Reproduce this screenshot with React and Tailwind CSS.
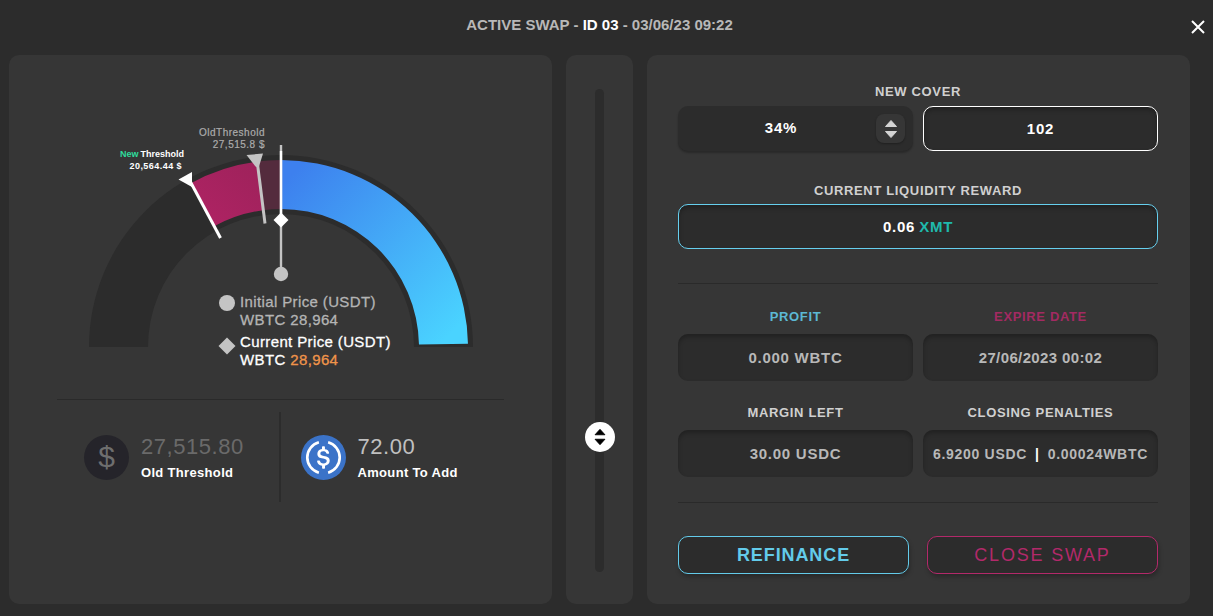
import { useState } from "react";

const CX = 281;
const CY = 347;

// Angles are measured in degrees clockwise from the top of the dial.
function point(radius, angle) {
  const a = (angle * Math.PI) / 180;
  return `${(CX + radius * Math.sin(a)).toFixed(2)} ${(CY - radius * Math.cos(a)).toFixed(2)}`;
}

function ring(outer, inner, from, to) {
  return `M${point(outer, from)} A${outer} ${outer} 0 0 1 ${point(outer, to)} L${point(inner, to)} A${inner} ${inner} 0 0 0 ${point(inner, from)} Z`;
}

function Gauge() {
  return (
    <svg
      viewBox="81 125 400 250"
      className="mx-auto block w-[400px] max-w-full"
      role="img"
      aria-label="Swap price gauge"
    >
      <defs>
        <linearGradient id="gain" gradientUnits="userSpaceOnUse" x1="281" y1="185" x2="440" y2="345">
          <stop offset="0" stopColor="#3d80ee" />
          <stop offset="1" stopColor="#4ad3ff" />
        </linearGradient>
        <linearGradient id="loss" gradientUnits="userSpaceOnUse" x1="200" y1="230" x2="260" y2="165">
          <stop offset="0" stopColor="#b02364" />
          <stop offset="1" stopColor="#9e225b" />
        </linearGradient>
      </defs>
      <path d={ring(192, 133, -90, 90)} fill="#2c2c2c" />
      <path d={ring(187, 138, -28.8, -7.4)} fill="url(#loss)" />
      <path d={ring(187, 138, -7.4, 0)} fill="#542b3d" />
      <path d={ring(187, 138, 0, 89)} fill="url(#gain)" />

      <path d="M190 181L220.5 238" stroke="#fff" strokeWidth="3" />
      <path d="M178.500 179.500L192 172V187Z" fill="#fff" />
      <path d="M257.500 164L265 223.500" stroke="#c4c4c4" strokeWidth="3" />
      <path d="M246.500 155L263 153.500L258.500 168L255.500 166.500Z" fill="#c4c4c4" />

      <path d="M281 145V270" stroke="#c4c4c4" strokeWidth="2.4" />
      <path d="M281 151V220" stroke="#fff" strokeWidth="2.4" />
      <path d="M281 212.500L288.500 220L281 227.500L273.500 220Z" fill="#fff" />
      <circle cx="281" cy="274" r="7.2" fill="#c4c4c4" />

      <g className="tracking-wider" fontSize="10" fill="#acacac" stroke="#acacac" strokeWidth="0.2" textAnchor="end">
        <text x="265" y="136">OldThreshold</text>
        <text x="265" y="148">27,515.8 $</text>
      </g>
      <g fontSize="9" fontWeight="700" fill="#fff">
        <text x="120" y="157" fill="#2fdc9c">New</text>
        <text x="184" y="157" textAnchor="end">Threshold</text>
        <text className="tracking-wider" x="182" y="169" textAnchor="end">20,564.44 $</text>
      </g>

      <circle cx="227" cy="303" r="8" fill="#c4c4c4" />
      <path d="M227 337.500L235.500 346L227 354.500L218.500 346Z" fill="#c4c4c4" />
      <g className="tracking-wide" fontSize="15" strokeWidth="0.3">
        <g fill="#b4b4b4" stroke="#b4b4b4">
          <text x="240" y="307">Initial Price (USDT)</text>
          <text x="240" y="325">WBTC 28,964</text>
        </g>
        <g fill="#fff" stroke="#fff">
          <text x="240" y="347">Current Price (USDT)</text>
          <text x="240" y="365">
            WBTC <tspan fill="#f0944a" stroke="#f0944a">28,964</tspan>
          </text>
        </g>
      </g>
    </svg>
  );
}

function UsdcIcon() {
  return (
    <svg viewBox="0 0 32 32" className="size-[45px] shrink-0" aria-hidden="true">
      <circle cx="16" cy="16" r="16" fill="#3b73c8" />
      <path
        fill="#fff"
        d="M20.022 18.124c0-2.124-1.28-2.852-3.84-3.156-1.828-.243-2.193-.728-2.193-1.578 0-.85.61-1.396 1.828-1.396 1.097 0 1.707.364 2.011 1.275a.458.458 0 00.427.303h.975a.416.416 0 00.427-.425v-.06a3.04 3.04 0 00-2.743-2.489V9.142c0-.243-.183-.425-.487-.486h-.915c-.243 0-.426.182-.487.486v1.396c-1.829.242-2.986 1.456-2.986 2.974 0 2.002 1.218 2.791 3.778 3.095 1.707.303 2.255.668 2.255 1.639 0 .97-.853 1.638-2.011 1.638-1.585 0-2.133-.667-2.316-1.578-.06-.242-.244-.364-.427-.364h-1.036a.416.416 0 00-.426.425v.06c.243 1.518 1.219 2.61 3.23 2.914v1.457c0 .242.183.425.487.485h.915c.243 0 .426-.182.487-.485V21.34c1.829-.303 3.047-1.578 3.047-3.217z"
        transform="translate(-1.6 -1.6) scale(1.1)"
      />
      <path
        d="M12.700 5.200A11.200 11.200 0 0 0 12.700 26.800M19.300 5.200A11.200 11.200 0 0 1 19.300 26.800"
        fill="none"
        stroke="#fff"
        strokeWidth="1.900"
      />
    </svg>
  );
}

function Arrows({ className }) {
  return (
    <svg viewBox="0 0 14 20" className={className} fill="currentColor" stroke="currentColor" strokeLinejoin="round" aria-hidden="true">
      <path d="M7 1.500L12.500 7.500H1.500Z" />
      <path d="M7 18.500L12.500 12.500H1.500Z" />
    </svg>
  );
}

function PriceSlider() {
  const [value, setValue] = useState(28);
  return (
    <section className="flex justify-center rounded-[10px] bg-[#363636] pt-[34px] pb-8">
      <div className="relative w-[9px] rounded-full bg-[#2c2c2c]">
        <input
          type="range"
          aria-label="Cover"
          value={value}
          onChange={(e) => setValue(Number(e.target.value))}
          className="absolute inset-y-0 -left-3 h-full w-8 cursor-pointer opacity-0 [direction:rtl] [writing-mode:vertical-lr]"
        />
        <span
          className="pointer-events-none absolute left-1/2 flex size-[30px] -translate-x-1/2 -translate-y-1/2 items-center justify-center rounded-full bg-white text-black"
          style={{ top: `${100 - value}%` }}
        >
          <Arrows className="h-[18px] w-[14px]" />
        </span>
      </div>
    </section>
  );
}

function Metric({ id, label, tone, valueClass = "text-[15px] tracking-wider", children }) {
  return (
    <div>
      <label htmlFor={id} className={`block text-center text-[13px] leading-4 font-bold tracking-wider ${tone}`}>
        {label}
      </label>
      <output
        id={id}
        className={`mt-[9px] flex h-[47px] items-center justify-center rounded-[10px] bg-[#2c2c2c] pt-px font-bold whitespace-pre text-[#b8b8b8] shadow-[inset_0_3px_4px_rgba(0,0,0,0.25)] ${valueClass}`}
      >
        {children}
      </output>
    </div>
  );
}

function SwapForm() {
  const [cover, setCover] = useState("34%");
  const [amount, setAmount] = useState("102");
  return (
    <form className="rounded-[10px] bg-[#363636] pt-[29px] pr-8 pb-[30px] pl-[31px]" onSubmit={(e) => e.preventDefault()}>
      <label htmlFor="cover" className="block text-center text-[13px] leading-4 font-bold tracking-wider text-[#d0d0d0]">
        NEW COVER
      </label>
      <div className="mt-[6px] grid grid-cols-2 gap-[10px]">
        <div className="flex h-[45px] items-center rounded-[10px] bg-[#2c2c2c] pr-2 shadow-[0_2px_2px_rgba(0,0,0,0.25)]">
          <input
            id="cover"
            value={cover}
            onChange={(e) => setCover(e.target.value)}
            className="w-full min-w-0 flex-1 bg-transparent pl-2 text-center text-[15px] font-bold tracking-wider text-white outline-none"
          />
          <button
            type="button"
            aria-label="Change cover"
            className="flex size-[29px] items-center justify-center rounded-lg bg-[#363636] text-[#d4d4d4] shadow-[0_1px_2px_rgba(0,0,0,0.3)]"
          >
            <Arrows className="h-5 w-[14px]" />
          </button>
        </div>
        <input
          aria-label="Cover amount"
          value={amount}
          onChange={(e) => setAmount(e.target.value)}
          className="h-[45px] w-full min-w-0 rounded-[10px] border border-white bg-[#2c2c2c] text-center text-[15px] font-bold tracking-wider text-white shadow-[inset_0_3px_4px_rgba(0,0,0,0.25)] outline-none"
        />
      </div>

      <label htmlFor="reward" className="mt-8 block text-center text-[13px] leading-4 font-bold tracking-wider text-[#d0d0d0]">
        CURRENT LIQUIDITY REWARD
      </label>
      <output
        id="reward"
        className="mt-[5px] flex h-[45px] items-center justify-center gap-1 rounded-[10px] border border-[#66cfee] bg-[#2c2c2c] pt-px text-[15px] font-bold tracking-wider text-white shadow-[inset_0_3px_4px_rgba(0,0,0,0.25)]"
      >
        0.06 <span className="text-[#1fb9ac]">XMT</span>
      </output>

      <hr className="mt-[34px] border-[#2a2a2a]" />

      <div className="mt-[25px] grid grid-cols-2 gap-x-[10px] gap-y-6">
        <Metric id="profit" label="PROFIT" tone="text-[#5cb8d4]">0.000 WBTC</Metric>
        <Metric id="expiry" label="EXPIRE DATE" tone="text-[#a32a62]" valueClass="text-[15px] tracking-wide">27/06/2023 00:02</Metric>
        <Metric id="margin" label="MARGIN LEFT" tone="text-[#d0d0d0]">30.00 USDC</Metric>
        <Metric id="penalties" label="CLOSING PENALTIES" tone="text-[#d0d0d0]" valueClass="gap-2 text-sm tracking-wider">
          <span>6.9200 USDC</span>
          <span className="text-white">|</span>
          <span>0.00024WBTC</span>
        </Metric>
      </div>

      <hr className="mt-[25px] border-[#2a2a2a]" />

      <div className="mt-[33px] grid grid-cols-2 gap-[18px]">
        <button
          type="button"
          className="h-[38px] rounded-[10px] border border-[#63cbea] bg-[#2c2c2c] text-lg leading-none font-bold tracking-wider text-[#63cbea] shadow-[1px_3px_4px_rgba(0,0,0,0.25)]"
        >
          REFINANCE
        </button>
        <button
          type="button"
          className="h-[38px] rounded-[10px] border border-[#b3296a] bg-[#2c2c2c] text-lg leading-none tracking-widest text-[#b3296a] shadow-[1px_3px_4px_rgba(0,0,0,0.25)]"
        >
          CLOSE SWAP
        </button>
      </div>
    </form>
  );
}

export default function App() {
  return (
    <div className="min-h-screen bg-[#2c2c2c] pr-[23px] pb-3 pl-[9px] font-['Liberation_Sans',Arial,sans-serif]">
      <header className="relative flex h-[55px] items-start justify-center pt-4">
        <h1 className="text-[15px] leading-[18px] font-bold text-[#b8b8b8]">
          ACTIVE SWAP - <span className="text-white">ID 03</span> - 03/06/23 09:22
        </h1>
        <button type="button" aria-label="Close" className="absolute top-[18px] -right-[17px] p-[2px] text-white">
          <svg viewBox="0 0 14 14" className="size-[14px]" fill="none" stroke="currentColor" strokeWidth="2" aria-hidden="true">
            <path d="M1 1L13 13M13 1L1 13" />
          </svg>
        </button>
      </header>

      <main className="grid grid-cols-[minmax(0,1fr)_67px_minmax(0,1fr)] gap-[14px]">
        <section className="rounded-[10px] bg-[#363636] px-12 pt-[70px]">
          <Gauge />
          <hr className="mt-6 border-[#2a2a2a]" />
          <div className="mt-3 grid h-[90px] grid-cols-2">
            <div className="flex items-center gap-3 border-r-2 border-[#2c2c2c] pl-[27px]">
              <span className="flex size-[45px] shrink-0 items-center justify-center rounded-full bg-[#25242a] text-[30px] leading-none text-[#6e6e6e]">
                $
              </span>
              <div className="pt-1">
                <p className="text-[22px] leading-7 tracking-wide text-[#6a6a6a]">27,515.80</p>
                <p className="text-[13px] leading-6 font-bold tracking-wide text-white">Old Threshold</p>
              </div>
            </div>
            <div className="flex items-center gap-3 pl-5">
              <UsdcIcon />
              <div className="pt-1">
                <p className="text-[22px] leading-7 tracking-wide text-[#c0c0c0]">72.00</p>
                <p className="text-[13px] leading-6 font-bold tracking-wide text-white">Amount To Add</p>
              </div>
            </div>
          </div>
        </section>
        <PriceSlider />
        <SwapForm />
      </main>
    </div>
  );
}
